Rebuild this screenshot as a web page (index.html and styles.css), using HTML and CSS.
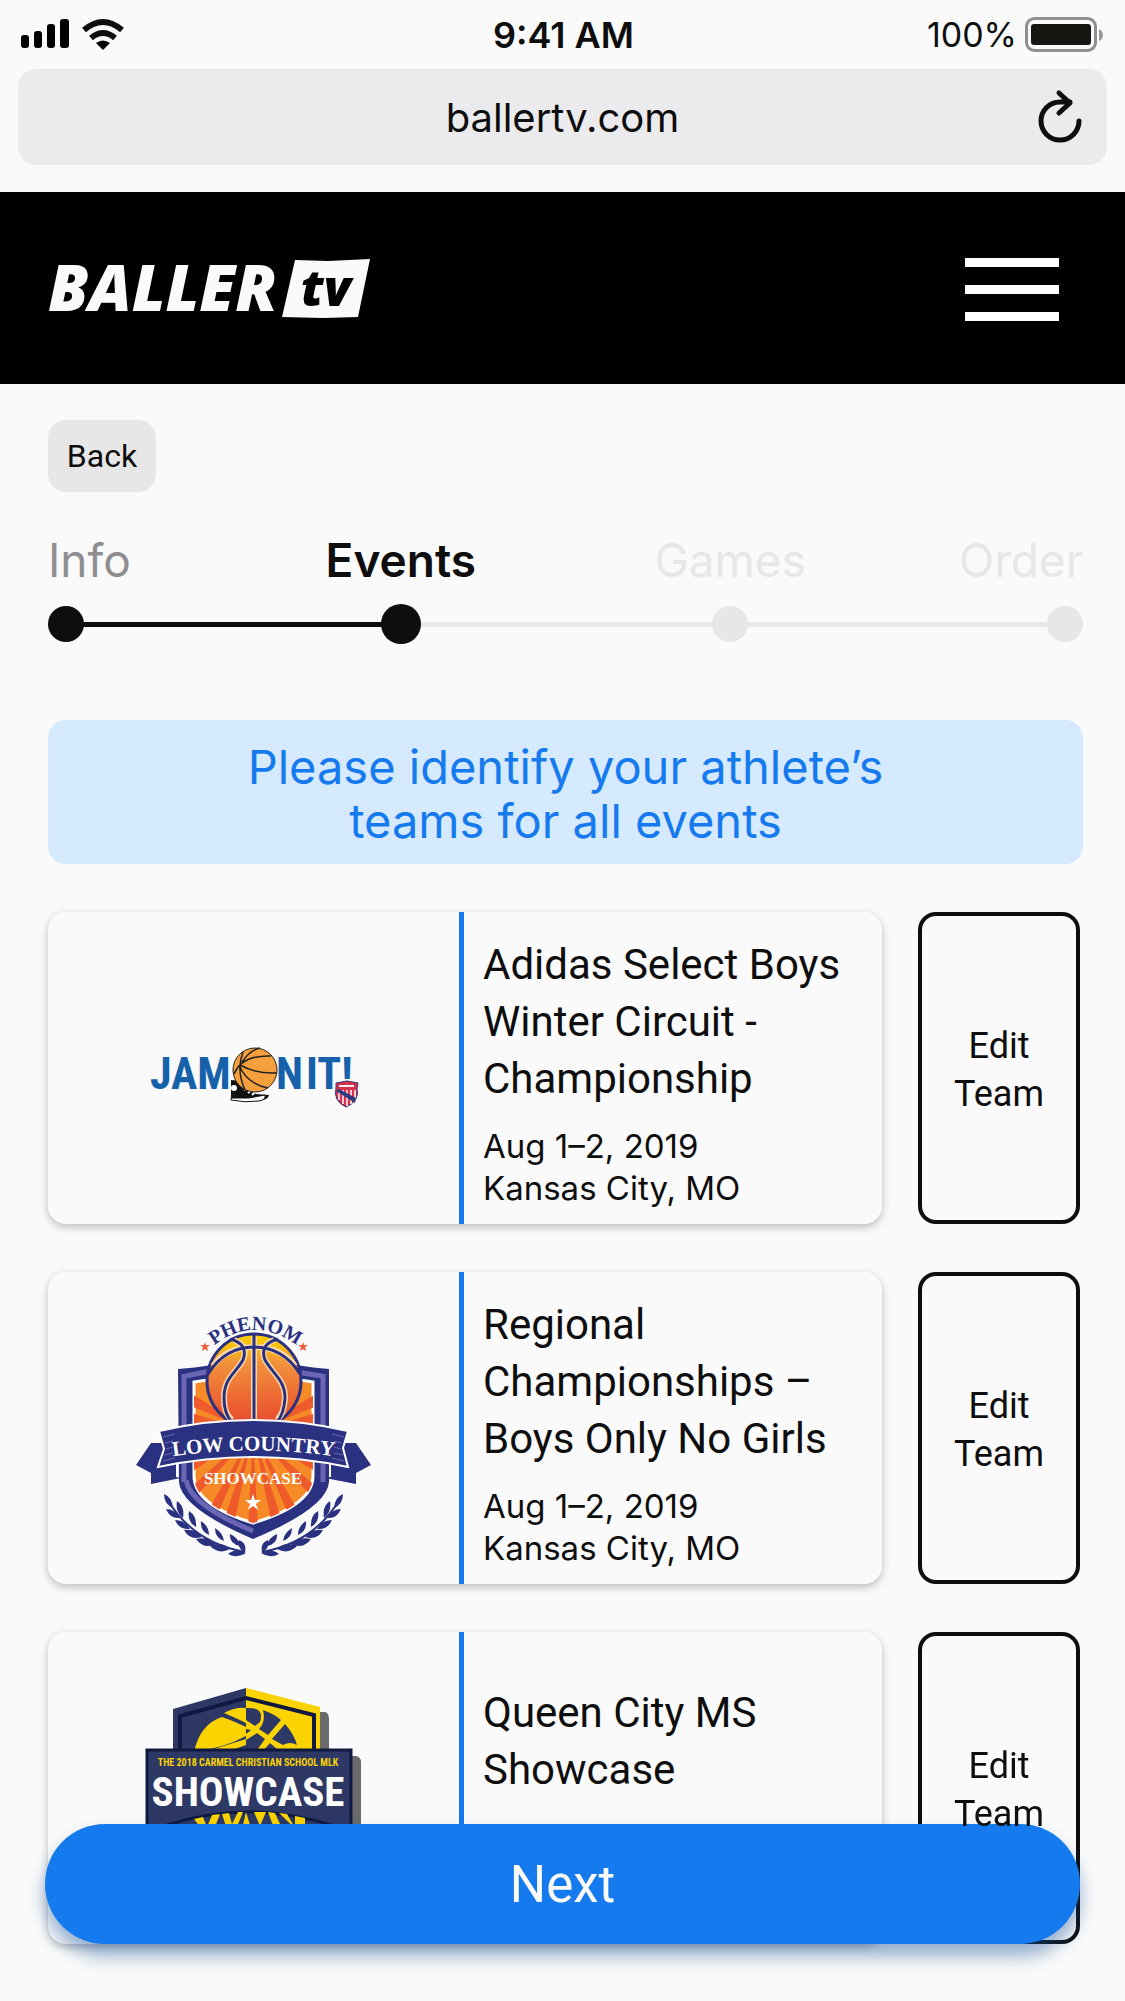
FILE: index.html
```html
<!DOCTYPE html>
<html lang="en">
<head>
<meta charset="utf-8">
<meta name="viewport" content="width=device-width, initial-scale=1">
<title>BallerTV – Events</title>
<link rel="stylesheet" href="styles.css">
</head>
<body>
<div class="browser">
  <div class="status">
    <svg class="status-signal" width="104" height="36" viewBox="0 0 104 36" aria-label="Signal and Wi-Fi">
      <rect x="1" y="18" width="8" height="13" rx="3"/>
      <rect x="14" y="14" width="8" height="17" rx="3"/>
      <rect x="27" y="7" width="8" height="24" rx="3"/>
      <rect x="40" y="2" width="9" height="29" rx="3"/>
      <g fill="none" stroke="#0e0e0e" stroke-width="6">
        <path d="M64 13Q83 -3 102 13"/><path d="M71 21Q83 11 95 21"/>
      </g>
      <path d="M76 26Q83 21 90 26L83 33Z"/>
    </svg>
    <span class="status-time">9:41 AM</span>
    <span class="status-power">100%
      <svg width="78" height="36" viewBox="0 0 78 36" aria-label="Battery full">
        <rect x="1.500" y="1.500" width="69" height="32" rx="8" fill="none" stroke="#8f8f8f" stroke-width="3"/>
        <rect x="6" y="7" width="60" height="21" rx="3" fill="#161613"/>
        <path d="M74 12q4 2 4 6t-4 6z" fill="#9a9a9a"/>
      </svg>
    </span>
  </div>
  <div class="address">
    <span>ballertv.com</span>
    <button class="reload" type="button" aria-label="Reload">
      <svg width="44" height="54" viewBox="0 0 44 54" fill="none" stroke="#0e0e0e" stroke-width="5" stroke-linecap="round" stroke-linejoin="round">
        <path d="M40 31A19 19 0 1 1 21 12H31M20 3L31 13L20 23"/>
      </svg>
    </button>
  </div>
</div>

<header class="topbar">
  <a class="logo" href="#" aria-label="BallerTV home">
    <svg width="324" height="62" viewBox="0 0 324 62">
      <text x="0" y="53" class="logo-name" fill="#fafafa">BALLER</text>
      <path d="M247 2L280 3L322 1L310 59L275 60L234 59Z" fill="#fafafa"/>
      <text x="253" y="48" class="logo-tv">tv</text>
    </svg>
  </a>
  <button class="menu" type="button" aria-label="Menu"><span></span><span></span><span></span></button>
</header>

<main class="page">
  <button class="back" type="button">Back</button>

  <ol class="steps">
    <li class="step step-done"><span>Info</span><i></i></li>
    <li class="step step-current" aria-current="step"><span>Events</span><i></i></li>
    <li class="step"><span>Games</span><i></i></li>
    <li class="step"><span>Order</span><i></i></li>
  </ol>

  <p class="notice">Please identify your athlete’s<br>teams for all events</p>

  <section class="events">
    <div class="event">
      <article class="card">
        <div class="card-logo">
          <svg width="208" height="84" viewBox="0 -22 208 84" role="img" aria-label="Jam On It!">
            <g class="jam" fill="#1562aa">
              <text x="0" y="41">JAM</text><text x="126" y="41">N</text><text x="156" y="41">IT!</text>
            </g>
            <path d="M81 32l10 1q5 8 15 13l13 1q-1 5-8 5H81Z" fill="#111"/>
            <path d="M81 50h18l16-3q1 5-6 6-14 2-28-1z" fill="#fff" stroke="#111" stroke-width="1"/>
            <circle cx="84" cy="40" r="3" fill="#fff"/>
            <path d="M91 38l7-3M94 42l6-4M98 45l5-4M102 47l4-4" stroke="#fff" stroke-width="2"/>
            <circle cx="105" cy="22" r="22" fill="#f5a03c" stroke="#222" stroke-width="1"/>
            <path d="M84 26Q92 7 121 8M93 4Q86 22 95 42M90 17Q106 26 127 25M89 17Q97 36 118 40M110 0Q100 2 92 14" fill="none" stroke="#222" stroke-width="1.500"/>
            <path d="M186 35l11-2 11 2-1 5q3 13-11 19-13-6-10-19z" fill="#d8304b" stroke="#2d3a80" stroke-width="1"/>
            <path d="M189 42v10M193 42v14M197 42v16M201 42v14M205 42v10" stroke="#fff" stroke-width="1.500"/>
            <path d="M186 43l19 12 1-5-17-9z" fill="#2d3a80"/><path d="M189 38h15" stroke="#eee" stroke-width="2"/>
          </svg>
        </div>
        <div class="card-text">
          <h2>Adidas Select Boys Winter Circuit - Championship</h2>
          <p>Aug 1–2, 2019<br>Kansas City, MO</p>
        </div>
      </article>
      <button class="edit" type="button"><span>Edit<br>Team</span></button>
    </div>

    <div class="event">
      <article class="card">
        <div class="card-logo">
          <svg width="236" height="264" viewBox="17 6 236 264" role="img" aria-label="Phenom Low Country Showcase">
            <defs>
              <linearGradient id="ball" x1="0" y1="0" x2="0" y2="1"><stop offset="0" stop-color="#fdd000"/><stop offset=".14" stop-color="#f9bd10"/><stop offset=".3" stop-color="#f2923b"/><stop offset="1" stop-color="#e9452f"/></linearGradient>
              <clipPath id="shield"><path d="M75 92Q135 82 194 92V186Q194 215 134 233Q75 215 75 186Z"/></clipPath>
              <path id="phenom" d="M93 57Q135 23 180 57"/>
              <path id="low" d="M50 167Q134 154 219 167"/>
              <g id="laurel" fill="#2a3180">
                <path d="M47 207Q72 252 126 262" fill="none" stroke="#2a3180" stroke-width="2"/>
                <path d="M45 204q8 3 9 14q-9-4-9-14zM58 211q8 5 6 17q-8-6-6-17zM70 221q8 5 7 16q-9-5-7-16zM82 231q8 5 8 14q-9-4-8-14zM96 238q8 5 9 13q-9-3-9-13zM111 244q9 4 10 12q-11-2-10-12zM120 250q8 3 6 12q-8-3-6-12zM47 219q9 0 14 9q-10 1-14-9zM56 230q10 0 15 9q-11 1-15-9zM65 240q11-2 18 7q-12 4-18-7zM77 249q12-3 20 5q-12 6-20-5zM91 256q12-5 20 3q-11 6-20-3zM109 264q9-7 18-1q-9 6-18 1z"/>
              </g>
            </defs>
            <path d="M59 79Q95 76 109 71h52Q176 76 210 79V192Q208 218 134 249Q62 218 60 192Z" fill="#2a3180"/>
            <path d="M67 86Q96 80 110 78M158 78Q180 83 203 86M67 190Q71 215 134 241" fill="none" stroke="#6b66b4" stroke-width="5"/>
            <path d="M65 84V192M204 84V192" fill="none" stroke="#6b66b4" stroke-width="5"/>
            <path d="M75 92Q135 82 194 92V186Q194 215 134 233Q75 215 75 186Z" fill="#f58a26" stroke="#fff" stroke-width="3"/>
            <g clip-path="url(#shield)" fill="#ef5a2b">
              <path d="M134 142L60 96V111ZM134 142L60 119V133ZM134 142L60 150V162ZM134 142L60 176V190ZM134 142L60 208V226ZM134 142L78 240H92ZM134 142L102 240H114ZM134 142L129 240H139ZM134 142L210 96V111ZM134 142L210 119V133ZM134 142L210 150V162ZM134 142L210 176V190ZM134 142L210 208V226ZM134 142L190 240H176ZM134 142L166 240H154Z"/>
            </g>
            <circle cx="135" cy="91" r="47" fill="url(#ball)" stroke="#2a3180" stroke-width="3"/>
            <g fill="none" stroke="#fbd9a8" stroke-width="6"><path d="M135 47V132M115 50Q130 56 124 70C116 84 105 88 105 108Q105 124 113 130M155 50Q140 56 146 70C154 84 166 90 166 108Q165 124 158 130M94 76Q108 57 135 57T176 76"/></g>
            <g fill="none" stroke="#2a3180" stroke-width="3"><path d="M135 44V136M111 49Q130 54 124 70C116 84 105 88 105 108Q105 124 113 132M159 49Q140 54 146 70C154 84 166 90 166 108Q165 124 158 132M89 84Q106 57 135 57T181 84"/></g>
            <path d="M17 175L32 153L57 153V187L62 188L32 194V183ZM252 175L237 153L212 153V187L206 188L237 194V183Z" fill="#2a3180"/>
            <path d="M40 141Q134 119 229 141L224 158L229 177Q134 157 39 177L45 159Z" fill="#2a3180" stroke="#fff" stroke-width="2"/>
            <g fill="none" stroke="#6b66b4" stroke-width="1"><path d="M44 147l12-3M46 153l8-2M47 159l7-2M45 165l9-2M44 171l12-3M225 147l-12-3M223 153l-8-2M222 159l-7-2M224 165l-9-2M225 171l-12-3"/></g>
            <text class="slab" font-size="21" fill="#fff" text-anchor="middle"><textPath href="#low" startOffset="50%">LOW COUNTRY</textPath></text>
            <text class="slab" font-size="17" x="134" y="194" fill="#fff" text-anchor="middle">SHOWCASE</text>
            <path d="M134 204l2 6h6l-5 4 2 6-5-4-5 4 2-6-5-4h6z" fill="#fff"/>
            <text class="slab" font-size="20" fill="#2a3180" text-anchor="middle"><textPath href="#phenom" startOffset="50%">PHENOM</textPath></text>
            <path id="star" d="M86 52l1 3h4l-3 2 1 4-3-2-3 2 1-4-3-2h4z" fill="#ef5a3b"/>
            <use href="#star" x="98"/>
            <use href="#laurel"/>
            <use href="#laurel" transform="translate(269 0) scale(-1 1)"/>
          </svg>
        </div>
        <div class="card-text">
          <h2>Regional Championships – Boys Only No Girls</h2>
          <p>Aug 1–2, 2019<br>Kansas City, MO</p>
        </div>
      </article>
      <button class="edit" type="button"><span>Edit<br>Team</span></button>
    </div>

    <div class="event">
      <article class="card">
        <div class="card-logo">
          <svg width="216" height="200" viewBox="16 18 216 200" role="img" aria-label="The 2018 Carmel Christian School MLK Showcase">
            <path d="M190 42h5q4 1 4 7v37h27q5 1 5 6V200H190Z" fill="#6b6b6b"/>
            <path d="M43 39L116 18V90H43Z" fill="#2d3865"/><path d="M116 18L190 37V90H116Z" fill="#fad300"/>
            <path d="M50 90V46L116 28L184 45V90" fill="none" stroke="#101a40" stroke-width="4"/>
            <path d="M64 82Q70 54 92 47Q106 52 116 57V66Q94 78 64 82ZM94 43Q105 37 116 38V53Q106 48 94 43Z" fill="#fad300"/>
            <path d="M116 38Q135 37 130 52L125 56L116 50ZM133 40Q144 44 151 50L138 65L129 59Q136 52 133 40ZM155 54Q164 64 167 75Q160 71 153 75L142 69ZM116 59L121 60L116 64ZM127 63L135 69L127 80H116V70ZM140 73L148 80H134Z" fill="#2d3865"/>
            <path d="M84 79L116 69V75L102 80Z" fill="#fad300"/>
            <path d="M17 80H221V210H17Z" fill="#2d3865" stroke="#101a40" stroke-width="3"/>
            <text class="mlk" x="118" y="96" fill="#fad300" text-anchor="middle">THE 2018 CARMEL CHRISTIAN SCHOOL MLK</text>
            <path d="M34 156Q118 128 204 156V210H34Z" fill="#2d3865" stroke="#101a40" stroke-width="3"/>
            <path d="M64 149l9-2 4 10 5-12 8-1-10 26zM92 144l7-1 3 11 6-12h5l-12 30zM116 142l8 26h-14zM124 142h12l-6 14zM138 142l7 1 12 26h-9zM149 143l8 1 8 14v-12l10 2v20z" fill="#fad300"/>
            <text class="showcase" x="118" y="136" fill="#fff" text-anchor="middle">SHOWCASE</text>
          </svg>
        </div>
        <div class="card-text">
          <h2>Queen City MS Showcase</h2>
          <p>Aug 1–2, 2019<br>Kansas City, MO</p>
        </div>
      </article>
      <button class="edit" type="button"><span>Edit<br>Team</span></button>
    </div>
  </section>
</main>

<div class="next-bar"><button class="next" type="button">Next</button></div>
</body>
</html>
```
FILE: styles.css
```css
* { box-sizing: border-box; }
body { margin: 0; background: #fafafa; color: #0e0e0e; font-family: Inter, "Open Sans", sans-serif; }
button { font: inherit; color: inherit; border: 0; padding: 0; background: none; cursor: pointer; }
svg { display: block; overflow: visible; }

.browser { padding: 0 18px 27px; font-family: Inter, "Liberation Sans", sans-serif; }
.status { display: grid; grid-template-columns: 1fr auto 1fr; align-items: center; height: 69px; padding-left: 2px; }
.status-time { font-size: 36px; font-weight: 600; }
.status-power { display: flex; justify-content: flex-end; align-items: center; gap: 8px; padding-right: 4px; font-size: 34px; }
.address { display: grid; grid-template-columns: 1fr auto 1fr; align-items: center; height: 96px; padding: 0 24px; border-radius: 18px; background: #ebebed; font-size: 40px; }
.address span { grid-column: 2; }
.reload { justify-self: end; }

.topbar { display: flex; justify-content: space-between; align-items: center; height: 192px; padding: 2px 66px 0 48px; background: #000; }
.logo-name { font: italic 800 64px "Open Sans", sans-serif; }
.logo-tv { font: italic 800 50px "Open Sans", sans-serif; }
.menu { display: flex; flex-direction: column; gap: 18px; width: 94px; }
.menu span { height: 9px; background: #fff; }

.page { padding: 36px 42px 57px 48px; }
.back { display: block; width: 108px; height: 72px; border-radius: 18px; background: #e7e7e7; font-family: Roboto, sans-serif; font-size: 32px; }

.steps { display: grid; grid-template-columns: 4fr 7fr 7fr 4fr; list-style: none; margin: 36px 0 78px; padding: 0; background: linear-gradient(90deg, #0e0e0e 34%, #e7e7e7 0) center bottom 15px / calc(100% - 36px) 5px no-repeat; font-size: 46px; line-height: 64px; color: #e7e7e7; }
.step { display: flex; flex-direction: column; align-items: center; gap: 14px; }
.step i { width: 36px; height: 36px; border-radius: 50%; background: #e7e7e7; }
.step:first-child { align-items: flex-start; color: #8e8e90; }
.step:last-child { align-items: flex-end; }
.step-current { color: #0e0e0e; font-weight: 600; }
.step-done i, .step-current i { background: #0e0e0e; }
.step-current i { width: 40px; height: 40px; margin: -2px; }

.notice { margin: 0 0 48px; padding: 20px 18px 16px; border-radius: 18px; background: #d5e9ff; color: #157aee; font-size: 47px; line-height: 54px; text-align: center; }

.events { display: grid; gap: 48px; padding-right: 3px; }
.event { display: grid; grid-template-columns: 1fr 162px; gap: 36px; }
.card { display: grid; grid-template-columns: 411px 1fr; min-height: 312px; border-radius: 18px; box-shadow: 0 3px 9px rgba(0, 0, 0, .25); }
.card-logo { display: grid; place-items: center; }
.card-text { display: flex; flex-direction: column; justify-content: center; gap: 18px; padding: 8px 20px 0 19px; border-left: 5px solid #157aee; }
.card-text h2 { margin: 0; font-family: Roboto, sans-serif; font-size: 42px; font-weight: 400; line-height: 57px; }
.card-text p { margin: 0; font-size: 33px; line-height: 42px; }
.edit { padding-top: 4px; border: 4px solid #0e0e0e; border-radius: 18px; font-family: Roboto, sans-serif; font-size: 36px; line-height: 48px; }
/* Edit labels stay readable above the floating Next button */
.edit span { position: relative; z-index: 2; }

.jam { font: 700 44px "Roboto Condensed", "Liberation Sans Narrow", sans-serif; }
.slab { font-family: "Liberation Serif", serif; font-weight: 700; }
.mlk { font: 700 10px "Roboto Condensed", "Liberation Sans Narrow", sans-serif; }
.showcase { font: 700 41px "Roboto Condensed", "Liberation Sans Narrow", sans-serif; }

.next-bar { position: fixed; inset: auto 45px 57px; z-index: 1; }
.next { width: 100%; height: 120px; border-radius: 60px; background: #157aee; color: #fafafa; font-family: Roboto, sans-serif; font-size: 51px; box-shadow: 0 12px 18px rgba(21, 80, 150, .45); }
```
